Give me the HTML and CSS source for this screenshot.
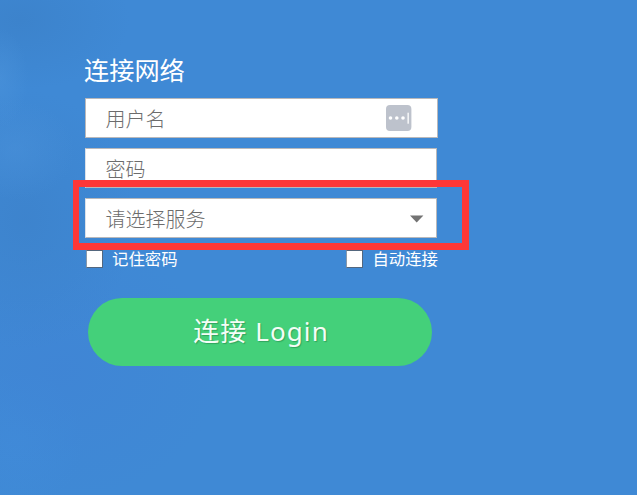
FILE: index.html
```html
<!DOCTYPE html>
<html lang="zh-CN">
<head>
<meta charset="utf-8">
<title>连接网络</title>
<link rel="stylesheet" href="styles.css">
</head>
<body>
<main class="page">
  <form class="login">
    <h1 class="title">连接网络</h1>
    <div class="field field-user">
      <span class="placeholder">用户名</span>
      <svg class="keyicon" width="26" height="26" viewBox="0 0 26 26">
        <rect x="0" y="0" width="25.4" height="26" rx="4" fill="#bdc2cc"/>
        <circle cx="4.5" cy="13" r="1.8" fill="#fff"/>
        <circle cx="10.8" cy="13" r="1.8" fill="#fff"/>
        <circle cx="17" cy="13" r="1.8" fill="#fff"/>
        <rect x="21.5" y="7.7" width="1.3" height="11" fill="#fff"/>
      </svg>
    </div>
    <div class="field"><span class="placeholder">密码</span></div>
    <div class="field">
      <span class="placeholder">请选择服务</span>
      <svg class="arrow" width="14" height="8" viewBox="0 0 14 8"><path d="M0 .5h13.4L6.7 7.6z" fill="#737373"/></svg>
      <div class="highlight"></div>
    </div>
    <div class="options">
      <label class="option"><span class="box"></span><span>记住密码</span></label>
      <label class="option"><span class="box"></span><span>自动连接</span></label>
    </div>
    <div class="submit">连接 Login</div>
  </form>
</main>
</body>
</html>
```
FILE: styles.css
```css
* { box-sizing: border-box; }
body {
  margin: 0;
  font-family: "Noto Sans CJK SC", sans-serif;
  color: #fff;
}
.page {
  height: 495px;
  overflow: hidden;
  padding: 50px 0 0 85px;
  background:
    radial-gradient(ellipse 28px 50px at 0 78px, rgba(80,151,221,.4), transparent),
    radial-gradient(ellipse 60px 50px at 15px 150px, rgba(76,147,219,.45), transparent),
    radial-gradient(ellipse 110px 70px at 20px 20px, rgba(58,126,196,.55), transparent),
    radial-gradient(ellipse 110px 130px at 25px 220px, rgba(60,128,200,.6), transparent),
    radial-gradient(ellipse 160px 130px at 60px 370px, rgba(64,131,213,.6), transparent),
    radial-gradient(ellipse 70px 70px at 15px 440px, rgba(65,142,220,.5), transparent),
    #3f89d5;
}
.login { width: 353px; }
.title {
  margin: 0 0 10px -1px;
  height: 38px;
  line-height: 38px;
  font-size: 25.2px;
  font-weight: 400;
}
.field {
  position: relative;
  display: flex;
  align-items: center;
  justify-content: space-between;
  width: 352px;
  height: 40px;
  margin-bottom: 10px;
  padding: 0 12px 0 19.5px;
  background: #fff;
  border: 1px solid #b9b8ba;
  border-left-color: #dce1e8;
}
.field-user { width: 353px; padding-right: 25px; border-left-color: #b9b8ba; }
.placeholder { padding-top: 1px; font-size: 20px; line-height: 38px; font-weight: 300; color: #6c6c6c; }
.arrow { margin-top: 2px; }
.highlight {
  position: absolute;
  top: -19px;
  left: -13px;
  width: 396px;
  height: 70px;
  border: 7px solid #fe3737;
  border-left-width: 6px;
  z-index: 1;
}
.options {
  display: flex;
  justify-content: space-between;
  height: 24px;
  margin-top: -2px;
}
.option { display: flex; align-items: center; gap: 9px; font-size: 16.4px; line-height: 24px; }
.box {
  width: 17px;
  height: 18px;
  margin-left: 1px;
  margin-top: 2px;
  background: #fff;
  border: 1px solid #53677e;
  border-left-color: #8999ab;
}
.submit {
  width: 344px;
  height: 68px;
  margin: 28px 0 0 3px;
  padding-left: 2px;
  border-radius: 34px;
  background: #44d07a;
  text-align: center;
  line-height: 66px;
  font-size: 26px;
  letter-spacing: 1.1px;
  color: #f4fdf6;
  font-family: "Noto Sans", "Noto Sans CJK SC", sans-serif;
  font-weight: 400;
  text-shadow: 1px 1px 1px rgba(20,100,50,.4);
}
```
